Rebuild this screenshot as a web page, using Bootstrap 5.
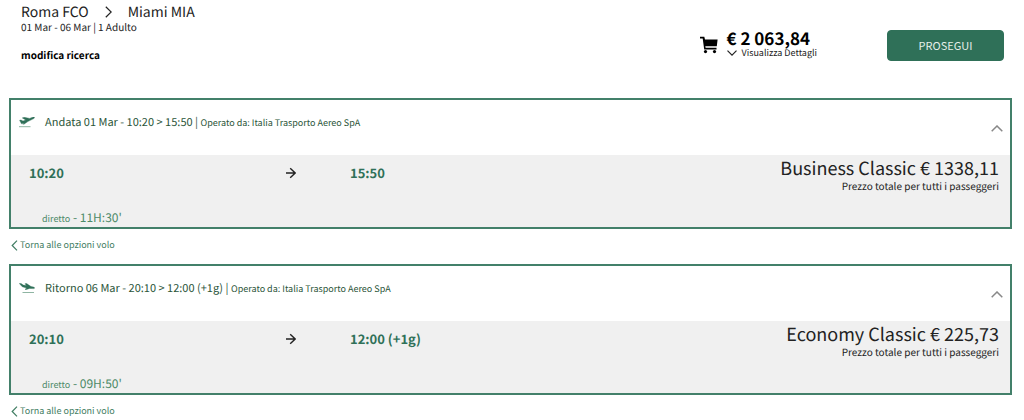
<!DOCTYPE html>
<html lang="it">
<head>
<meta charset="utf-8">
<meta name="viewport" content="width=device-width, initial-scale=1">
<title>Riepilogo voli</title>
<link href="https://cdn.jsdelivr.net/npm/bootstrap@5.3.0/dist/css/bootstrap.min.css" rel="stylesheet">
<style>
  :root { --green: #2f7058; --green-soft: #4d8a68; --ink: #222; }
  body { font-family: "Noto Sans CJK SC", "Noto Sans", sans-serif; font-size: 10px; line-height: 14px; color: var(--ink); background: #fff; text-rendering: geometricPrecision; }
  a { color: inherit; text-decoration: none; }
  svg { display: block; flex: none; }
  .page { padding: 3px 12px 0 9px; }
  .topbar { padding: 0 8px 0 12px; height: 95px; }
  .route { font-size: 14px; line-height: 18px; }
  .dates { line-height: 12px; }
  .edit-link { margin-top: 15px; color: #000; }
  .summary { margin: 25px 70px 0 0; gap: 9px; }
  .total { font-size: 17px; line-height: 20px; color: #000; }
  .details { gap: 5px; line-height: 10px; font-size: 9px; }
  .btn-go { width: 117px; height: 31px; margin-top: 27px; padding: 0; font-size: 11px; --bs-btn-color: #e6efe9; --bs-btn-bg: var(--green); --bs-btn-border-color: var(--green); --bs-btn-hover-color: #fff; --bs-btn-hover-bg: #265c48; --bs-btn-border-radius: 4px; }
  .flight { border: 2px solid #43806a; --bs-card-border-radius: 0; --bs-card-inner-border-radius: 0; }
  .flight-head { height: 55px; padding: 13px 8px 0; color: #2b5539; }
  .flight-title { font-size: 11px; line-height: 18px; margin-left: 10px; }
  .operator { font-size: 9px; }
  .toggle { margin: 12px -1px 0 0; --bs-btn-color: #888; }
  .flight-body { background: #f0f0f0; height: 72px; padding: 3px 11px 0 18px; display: grid; grid-template-columns: 257fr 64fr 649fr; grid-template-rows: 50px 19px; }
  .time { font-size: 13px; line-height: 18px; margin-top: 6px; color: var(--green); }
  .way { margin-top: 9px; }
  .fare { font-size: 18px; line-height: 20px; }
  .fare-note { line-height: 16px; }
  .duration { font-size: 12px; line-height: 20px; padding-left: 13px; color: var(--green-soft); }
  .duration small { font-size: 9px; }
  .back { margin: 8px 0 11px 2px; gap: 2px; font-size: 9px; line-height: 16px; color: #3f7d62; }
</style>
</head>
<body>
<svg class="d-none">
  <symbol id="chev" viewBox="0 0 10 6"><path d="M.5.6 5 5.100 9.500.6" fill="none" stroke="currentColor" stroke-width="1.200"/></symbol>
  <symbol id="up" viewBox="0 0 12 7"><path d="M.7 6.300 6 1l5.300 5.300" fill="none" stroke="currentColor" stroke-width="1.500"/></symbol>
  <symbol id="left" viewBox="0 0 7 11"><path d="M6 .6 1.200 5.500 6 10.400" fill="none" stroke="currentColor" stroke-width="1.200"/></symbol>
  <symbol id="arrow" viewBox="0 0 10 12"><path d="M0 6h9M4.200 1.200 9.200 6l-5 4.800" fill="none" stroke="currentColor" stroke-width="1.400"/></symbol>
</svg>
<main class="page container-fluid">
  <header class="topbar d-flex align-items-start">
    <div class="me-auto">
      <h1 class="route fw-normal m-0 d-flex align-items-center"><span>Roma FCO</span>
        <svg class="mx-3" width="7" height="12" viewBox="0 0 7 12"><path d="M.8.7 6.200 6 .8 11.300" fill="none" stroke="currentColor" stroke-width="1.200"/></svg>
        <span>Miami MIA</span></h1>
      <div class="dates">01 Mar - 06 Mar | 1 Adulto</div>
      <a href="#" class="edit-link fw-bold d-block">modifica ricerca</a>
    </div>
    <div class="summary d-flex align-items-start">
      <svg class="mt-2" width="18" height="18" viewBox="0 0 18 18"><path d="M0 .8h4.300L5 3.600h12.600l-.8 6.700H5.300l.3 1.500h10.900v1.700H4.200L2.700 2.400H0z"/><circle cx="5.500" cy="15.600" r="1.600"/><circle cx="14.500" cy="15.600" r="1.600"/></svg>
      <div>
        <div class="total fw-bold">€ 2 063,84</div>
        <a href="#" class="details d-flex align-items-center"><svg width="10" height="6"><use href="#chev"/></svg><span>Visualizza Dettagli</span></a>
      </div>
    </div>
    <button type="button" class="btn btn-go">PROSEGUI</button>
  </header>

  <section class="card flight">
    <div class="flight-head d-flex align-items-start">
      <svg class="mt-1" width="16" height="11" viewBox="0 0 16 11"><path d="M.6 3.300 2 3l2 1.100 2.700-1.200L3.300.9 5.200.3l5.400 1.100L13.600.200c1-.4 1.800-.2 1.900.200.200.6-.5 1-1.200 1.400L8.800 4.600 5.300 7l-1.400.3 1.400-1.400-2.800.9z" fill="#2f7058" stroke="#2f7058" stroke-width=".4"/><path d="M0 9.700h11.500" stroke="#8fb5a3"/></svg>
      <h2 class="flight-title fw-normal mb-0 me-auto">Andata 01 Mar - 10:20 &gt; 15:50 | <span class="operator">Operato da: Italia Trasporto Aereo SpA</span></h2>
      <button type="button" class="toggle btn p-0 border-0" aria-label="Chiudi andata"><svg width="12" height="7"><use href="#up"/></svg></button>
    </div>
    <div class="flight-body">
      <div class="time fw-bold">10:20</div>
      <svg class="way" width="10" height="12"><use href="#arrow"/></svg>
      <div class="d-flex justify-content-between"><div class="time fw-bold">15:50</div>
        <div class="text-end"><div class="fare">Business Classic € 1338,11</div><div class="fare-note">Prezzo totale per tutti i passeggeri</div></div></div>
      <div class="duration"><small>diretto</small> - 11H:30'</div>
    </div>
  </section>
  <a href="#" class="back d-flex align-items-center"><svg width="7" height="11"><use href="#left"/></svg><span>Torna alle opzioni volo</span></a>

  <section class="card flight">
    <div class="flight-head d-flex align-items-start">
      <svg class="mt-1" width="16" height="11" viewBox="0 0 16 11"><path d="M.3.500 2 .4l2.300 1.700 3.200.4L6 .700 7.600.6l4.400 2.900 2.500.6c.8.2 1.200.7 1 1.100-.2.500-1 .4-1.800.4L10.500 5.400 7.500 6.500 6 6.400 7.600 5 3.300 3.800z" fill="#2f7058" stroke="#2f7058" stroke-width=".4"/><path d="M3.500 9.500H15" stroke="#8fb5a3"/></svg>
      <h2 class="flight-title fw-normal mb-0 me-auto">Ritorno 06 Mar - 20:10 &gt; 12:00 (+1g) | <span class="operator">Operato da: Italia Trasporto Aereo SpA</span></h2>
      <button type="button" class="toggle btn p-0 border-0" aria-label="Chiudi ritorno"><svg width="12" height="7"><use href="#up"/></svg></button>
    </div>
    <div class="flight-body">
      <div class="time fw-bold">20:10</div>
      <svg class="way" width="10" height="12"><use href="#arrow"/></svg>
      <div class="d-flex justify-content-between"><div class="time fw-bold">12:00 (+1g)</div>
        <div class="text-end"><div class="fare">Economy Classic € 225,73</div><div class="fare-note">Prezzo totale per tutti i passeggeri</div></div></div>
      <div class="duration"><small>diretto</small> - 09H:50'</div>
    </div>
  </section>
  <a href="#" class="back d-flex align-items-center mb-0"><svg width="7" height="11"><use href="#left"/></svg><span>Torna alle opzioni volo</span></a>
</main>
<script src="https://cdn.jsdelivr.net/npm/bootstrap@5.3.0/dist/js/bootstrap.bundle.min.js"></script>
</body>
</html>
